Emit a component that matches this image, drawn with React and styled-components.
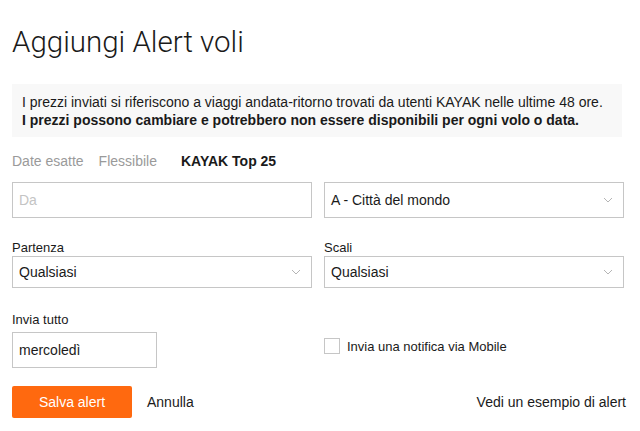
import React from "react";
import styled, { createGlobalStyle } from "styled-components";

const Global = createGlobalStyle`
  html, body { margin: 0; padding: 0; background: #fff; }
  body { font-family: "Liberation Sans", Arial, sans-serif; color: #1a1a1a; }
  * { box-sizing: border-box; }
`;

const Page = styled.div`
  width: 640px;
  padding: 24px 16px 0 12px;
`;

const Title = styled.h1`
  margin: 0;
  font-family: "Roboto", "Liberation Sans", sans-serif;
  font-weight: 300;
  font-size: 29.5px;
  line-height: 36px;
  color: #1a1a1a;
`;

const Info = styled.div`
  margin-top: 24px;
  width: 610px;
  height: 53px;
  background: #f8f8f8;
  padding: 9px 10px 0 10px;
  font-size: 14px;
  line-height: 18px;
  color: #1a1a1a;
`;

const InfoBold = styled.div`
  font-weight: 700;
`;

const Tabs = styled.div`
  display: flex;
  margin-top: 15px;
  font-size: 14px;
  line-height: 18px;
`;

const Tab = styled.span`
  color: ${(p) => (p.$active ? "#1a1a1a" : "#9a9a9a")};
  font-weight: ${(p) => (p.$active ? 700 : 400)};
  margin-right: ${(p) => p.$mr || 0}px;
`;

const Grid = styled.div`
  display: grid;
  grid-template-columns: 300px 300px;
  column-gap: 12px;
  margin-top: ${(p) => p.$mt}px;
  align-items: end;
`;

const Field = styled.div`
  display: flex;
  flex-direction: column;
`;

const Label = styled.div`
  font-size: 13px;
  line-height: 16px;
  color: #1a1a1a;
  margin-bottom: ${(p) => p.$gap}px;
`;

const Box = styled.div`
  height: ${(p) => p.$h}px;
  width: ${(p) => (p.$w ? `${p.$w}px` : "100%")};
  border: 1px solid #c6c6c6;
  background: #fff;
  display: flex;
  align-items: center;
  justify-content: space-between;
  padding: 0 10px 0 6px;
  font-size: 14px;
  color: ${(p) => (p.$placeholder ? "#c4c4c4" : "#1a1a1a")};
`;

const Chevron = () => (
  <svg width="10" height="6" viewBox="0 0 10 6">
    <path d="M1 1l4 4 4-4" fill="none" stroke="#b5b5b5" strokeWidth="1" />
  </svg>
);

const CheckRow = styled.label`
  display: flex;
  align-items: center;
  gap: 7px;
  font-size: 13px;
  color: #1a1a1a;
  margin-bottom: 14px;
`;

const Check = styled.span`
  width: 16px;
  height: 16px;
  border: 1px solid #c6c6c6;
  background: #fff;
`;

const Actions = styled.div`
  display: flex;
  align-items: center;
  margin-top: 18px;
  width: 614px;
`;

const Primary = styled.button`
  width: 120px;
  height: 32px;
  border: none;
  border-radius: 2px;
  background: #ff690f;
  color: #fff;
  font-family: inherit;
  font-size: 14px;
`;

const Cancel = styled.span`
  margin-left: 15px;
  font-size: 14px;
  color: #1a1a1a;
`;

const Example = styled.span`
  margin-left: auto;
  font-size: 14px;
  color: #1a1a1a;
`;

export default function App() {
  return (
    <>
      <Global />
      <Page>
        <Title>Aggiungi Alert voli</Title>
        <Info>
          <div>
            I prezzi inviati si riferiscono a viaggi andata-ritorno trovati da utenti KAYAK nelle ultime 48 ore.
          </div>
          <InfoBold>
            I prezzi possono cambiare e potrebbero non essere disponibili per ogni volo o data.
          </InfoBold>
        </Info>
        <Tabs>
          <Tab $mr={15}>Date esatte</Tab>
          <Tab $mr={24}>Flessibile</Tab>
          <Tab $active>KAYAK Top 25</Tab>
        </Tabs>
        <Grid $mt={12}>
          <Box $h={36} $placeholder>Da</Box>
          <Box $h={36}>
            A - Città del mondo
            <Chevron />
          </Box>
        </Grid>
        <Grid $mt={22}>
          <Field>
            <Label $gap={0}>Partenza</Label>
            <Box $h={32}>
              Qualsiasi
              <Chevron />
            </Box>
          </Field>
          <Field>
            <Label $gap={0}>Scali</Label>
            <Box $h={32}>
              Qualsiasi
              <Chevron />
            </Box>
          </Field>
        </Grid>
        <Grid $mt={24}>
          <Field>
            <Label $gap={4}>Invia tutto</Label>
            <Box $h={36} $w={145}>mercoledì</Box>
          </Field>
          <CheckRow>
            <Check />
            Invia una notifica via Mobile
          </CheckRow>
        </Grid>
        <Actions>
          <Primary>Salva alert</Primary>
          <Cancel>Annulla</Cancel>
          <Example>Vedi un esempio di alert</Example>
        </Actions>
      </Page>
    </>
  );
}
